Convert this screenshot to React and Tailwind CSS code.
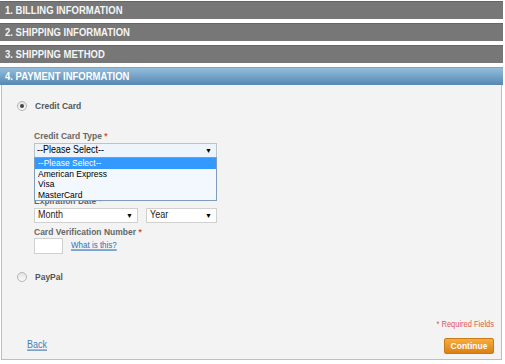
import React from "react";

const font = "font-['Liberation_Sans',Arial,sans-serif]";

function T({ children, className = "" }) {
  return <span className={`inline-block scale-y-[1.15] ${className}`}>{children}</span>;
}

function Bar({ children }) {
  return (
    <div className="h-[18px] w-[503px] bg-[#777777] border-t border-[#666] flex items-center pl-[5px] text-[9.5px] font-bold text-[#f5f5f5] leading-none">
      <T>{children}</T>
    </div>
  );
}

function Radio({ checked }) {
  return (
    <div className="w-[10px] h-[10px] rounded-full border border-[#b5b5b5] bg-gradient-to-b from-[#e3e3e3] to-[#fafafa] flex items-center justify-center">
      {checked && <div className="w-[4px] h-[4px] rounded-full bg-[#444]" />}
    </div>
  );
}

function Arrow() {
  return <span className="text-[7px] text-black leading-none">▼</span>;
}

function Label({ children, className = "" }) {
  return (
    <div className={`h-[12px] leading-[12px] text-[8.5px] font-bold text-[#666] ${className}`}>
      <T>
        {children} <span className="text-[#e0483c]">*</span>
      </T>
    </div>
  );
}

export default function App() {
  return (
    <div className={`w-[505px] h-[364px] bg-white ${font} pt-[1px]`}>
      <div className="flex flex-col gap-[4px]">
        <Bar>1. BILLING INFORMATION</Bar>
        <Bar>2. SHIPPING INFORMATION</Bar>
        <Bar>3. SHIPPING METHOD</Bar>
        <div className="h-[18px] w-[503px] bg-gradient-to-b from-[#93bddc] to-[#5788b2] border-t border-[#7aa6c8] flex items-center pl-[5px] text-[9.5px] font-bold text-white leading-none">
          <T>4. PAYMENT INFORMATION</T>
        </div>
      </div>
      <div className="ml-[1px] w-[501px] h-[275px] bg-[#f3f3f3] border border-t-0 border-[#a9c4da] flex flex-col">
        <div className="mt-[14px] ml-[15px] flex items-center gap-[8px] h-[14px]">
          <Radio checked />
          <T className="text-[8.5px] font-bold text-[#555]">Credit Card</T>
        </div>

        <div className="ml-[32px] mt-[17px] flex flex-col">
          <Label>Credit Card Type</Label>
          <div className="relative mt-[1px]">
            <div className="w-[183px] h-[15px] border border-[#b8c3cc] bg-[#edf4fb] flex items-center justify-between pl-[2px] pr-[4px] text-[9px] text-black leading-none">
              <T>--Please Select--</T>
              <Arrow />
            </div>
            <div className="absolute left-0 top-[14px] w-[183px] border border-[#7f9db9] bg-[#f2f8fd] text-[8.5px] text-black leading-[10.5px] z-10">
              <div className="bg-[#3399ff] text-white pl-[3px] h-[10.5px]"><T>--Please Select--</T></div>
              <div className="pl-[3px] h-[10.5px]"><T>American Express</T></div>
              <div className="pl-[3px] h-[10.5px]"><T>Visa</T></div>
              <div className="pl-[3px] h-[10.5px]"><T>MasterCard</T></div>
            </div>
          </div>
          <Label className="mt-[8px]">Credit Card Number</Label>
          <div className="w-[183px] h-[15px] border border-[#ccc] bg-white" />
          <Label className="mt-[2px]">Expiration Date</Label>
          <div className="mt-[1px] flex gap-[8px]">
            <div className="w-[104px] h-[15px] border border-[#d0d0d0] bg-white flex items-center justify-between pl-[3px] pr-[4px] text-[9px] text-[#222] leading-none">
              <T>Month</T>
              <Arrow />
            </div>
            <div className="w-[71px] h-[15px] border border-[#d0d0d0] bg-white flex items-center justify-between pl-[3px] pr-[4px] text-[9px] text-[#222] leading-none">
              <T>Year</T>
              <Arrow />
            </div>
          </div>
          <Label className="mt-[3px]">Card Verification Number</Label>
          <div className="flex items-end gap-[8px]">
            <div className="w-[29px] h-[16px] border border-[#d0d0d0] bg-white" />
            <a className="text-[8px] text-[#2d72b8] leading-none mb-[4px]"><T className="underline">What is this?</T></a>
          </div>
        </div>

        <div className="mt-[16px] ml-[15px] flex items-center gap-[8px] h-[14px]">
          <Radio />
          <T className="text-[8.5px] font-bold text-[#555]">PayPal</T>
        </div>

        <div className="mt-auto pr-[7px] flex justify-end text-[7.5px] text-[#e05a4e] leading-none mb-[10px]">
          <T>* Required Fields</T>
        </div>
        <div className="flex items-center justify-between pl-[25px] pr-[7px] mb-[5px]">
          <a className="text-[9px] text-[#4a7cb4] leading-none mb-[2px]"><T className="underline">Back</T></a>
          <div className="w-[50px] h-[16px] rounded-[2px] border border-[#c97a18] bg-gradient-to-b from-[#f6ad3c] to-[#de7f0e] flex items-center justify-center text-[8.5px] font-bold text-white leading-none">
            <T>Continue</T>
          </div>
        </div>
      </div>
    </div>
  );
}
